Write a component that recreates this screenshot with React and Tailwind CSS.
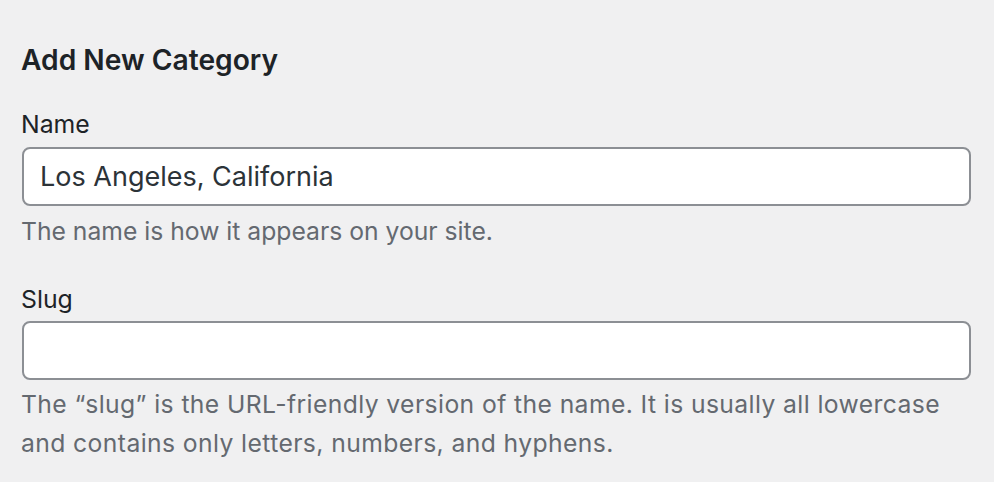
import React, { useState } from 'react';

export default function App() {
  const [name, setName] = useState('Los Angeles, California');
  const [slug, setSlug] = useState('');

  return (
    <div className="min-h-screen w-full bg-[#f0f0f1] text-[#1d2327] font-['Inter','Noto_Sans',sans-serif]">
      <div className="pl-[21px] pr-[23px] pt-[40px]">
        <h2 className="text-[28.2px] leading-[40px] font-semibold">Add New Category</h2>

        <div className="mt-[25px]">
          <label htmlFor="tag-name" className="block text-[24.8px] leading-[39px]">
            Name
          </label>
          <input
            id="tag-name"
            value={name}
            onChange={(e) => setName(e.target.value)}
            className="mt-[3px] block w-[calc(100%-1px)] h-[59px] ml-[1px] rounded-[8px] border-2 border-[#8c8f94] bg-white px-[16px] text-[27px] text-[#2c3338] outline-none"
          />
          <p className="mt-[6px] text-[24.7px] leading-[39px] text-[#646970]">
            The name is how it appears on your site.
          </p>
        </div>

        <div className="mt-[29px]">
          <label htmlFor="tag-slug" className="block text-[24.8px] leading-[39px]">
            Slug
          </label>
          <input
            id="tag-slug"
            value={slug}
            onChange={(e) => setSlug(e.target.value)}
            className="mt-[2px] block w-[calc(100%-1px)] h-[59px] ml-[1px] rounded-[8px] border-2 border-[#8c8f94] bg-white px-[16px] text-[27px] text-[#2c3338] outline-none"
          />
          <p className="mt-[5px] text-[24.7px] leading-[39px] tracking-[0.4px] text-[#646970]">
            The “slug” is the URL-friendly version of the name. It is usually all lowercase and contains only letters, numbers, and hyphens.
          </p>
        </div>
      </div>
    </div>
  );
}
